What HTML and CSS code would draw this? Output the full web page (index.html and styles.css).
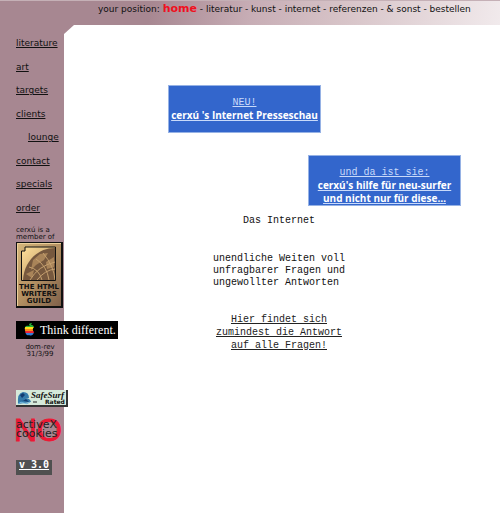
FILE: index.html
```
<!DOCTYPE html>
<html lang="de">
<head>
<meta charset="utf-8">
<title>cerxú - home</title>
<link rel="stylesheet" href="styles.css">
</head>
<body>
<header class="position">your position: <strong>home</strong> - literatur - kunst - internet - referenzen - &amp; sonst - bestellen</header>
<div class="page">
  <aside class="sidebar">
    <nav class="menu">
      <a href="#literature">literature</a>
      <a href="#art">art</a>
      <a href="#targets">targets</a>
      <a href="#clients">clients</a>
      <a class="sub" href="#lounge">lounge</a>
      <a href="#contact">contact</a>
      <a href="#specials">specials</a>
      <a href="#order">order</a>
    </nav>
    <p class="member">cerxú is a<br>member of</p>
    <svg class="guild" width="47" height="66" viewBox="0 0 47 66" role="img" aria-label="The HTML Writers Guild">
      <defs>
        <linearGradient id="brass" x2="1" y2="1"><stop offset="0" stop-color="#d6b77b"/><stop offset=".5" stop-color="#b39062"/><stop offset="1" stop-color="#80614a"/></linearGradient>
        <linearGradient id="sky" x2="1" y2="1"><stop offset="0" stop-color="#ffe09a"/><stop offset="1" stop-color="#b08a5c"/></linearGradient>
      </defs>
      <rect width="47" height="66" fill="#111"/>
      <rect x="1" y="1" width="44" height="63" fill="url(#brass)"/>
      <path d="M1.500 64V1.500H45" fill="none" stroke="#ecd09a"/>
      <path d="M9 5H40V39H5V9H9Z" fill="url(#sky)"/>
      <path d="M7 38C8 20 21 6 39 6V38Z" fill="#76583e"/>
      <path d="M17 18L24 12L32 11L28 18L20 23L15 28ZM30 20L38 15V25L31 27ZM10 32L18 28L16 36Z" fill="#a98459"/>
      <path d="M14 38Q22 24 39 20M21 38Q29 28 39 27M27 11Q38 24 39 38M20 17Q31 24 33 38M13 25Q23 27 26 38" fill="none" stroke="#c5a06f"/>
      <path d="M9 5H39.500V38.500H5.500V9H9Z" fill="none" stroke="#111"/>
      <g class="guild-text"><text x="23" y="47">THE HTML</text><text x="23" y="54">WRITERS</text><text x="23" y="61">GUILD</text></g>
    </svg>
    <svg class="think" width="102" height="18" viewBox="0 0 102 18" role="img" aria-label="Think different.">
      <defs><clipPath id="apple"><path d="M13 5C14 4 17 3 18 6C16 8 17 10 18 11C17 15 15 15 13 14C11 15 9 13 9 9C8 5 11 4 13 5ZM13 4Q13 2 16 2Q15 5 13 4Z"/></clipPath></defs>
      <rect width="102" height="18"/>
      <g clip-path="url(#apple)"><path fill="#27b336" d="M8 2h11v4H8z"/><path fill="#ffe21d" d="M8 6h11v2H8z"/><path fill="#ff8b18" d="M8 8h11v2H8z"/><path fill="#ee2636" d="M8 10h11v2H8z"/><path fill="#347bd5" d="M8 12h11v3H8z"/></g>
      <text class="think-text" x="24" y="13">Think different.</text>
    </svg>
    <p class="revision">dom-rev<br>31/3/99</p>
    <svg class="safe" width="52" height="17" viewBox="0 0 52 17" role="img" aria-label="SafeSurf Rated">
      <rect width="52" height="17" fill="#333"/><path fill="#d5e9da" d="M0 0h50v15H0z"/>
      <path d="M2 14Q1 3 7 2Q13 2 13 8L9 8Q14 8 15 12Z" fill="#347baa"/>
      <path d="M4 5l3-2 2 2-3 3zM3 10l4 1 3-2 3 3" fill="#123c70"/><path d="M2 14q3-3 6-1t6-1" fill="none" stroke="#73b8df"/>
      <text class="safe-name" x="15" y="8">SafeSurf</text><path d="M17 12h4" stroke="#222"/><text class="safe-rated" x="29" y="14">Rated</text>
    </svg>
    <svg class="no" width="48" height="30" viewBox="0 0 48 30" role="img" aria-label="NO activeX cookies">
      <text class="no-big" x="-2" y="26">NO</text>
      <g class="no-small"><text x="0" y="13">activeX</text><text x="0" y="22">cookies</text></g>
    </svg>
    <a class="version" href="#version">v 3.0</a>
  </aside>
  <main class="content">
    <a class="banner news" href="#presse">NEU!<b>cerxú 's Internet Presseschau</b></a>
    <a class="banner help" href="#hilfe">und da ist sie:<b>cerxú's hilfe für neu-surfer<br>und nicht nur für diese…</b></a>
    <div class="story">
      <h1>Das Internet</h1>
      <p>unendliche Weiten voll<br>unfragbarer Fragen und<br>ungewollter Antworten</p>
      <a href="#antwort">Hier findet sich<br>zumindest die Antwort<br>auf alle Fragen!</a>
    </div>
  </main>
</div>
</body>
</html>
```
FILE: styles.css
```
* { box-sizing: border-box; }
body {
  margin: 0;
  min-height: 100vh;
  display: flex;
  flex-direction: column;
  background: #a78791;
  color: #111;
  font: 9px/12px "DejaVu Sans", sans-serif;
}
p, h1 { margin: 0; }
.position {
  height: 25px;
  padding: 2px 0 0 98px;
  white-space: nowrap;
  border-top: 1px solid #c5b0b6;
  background: linear-gradient(100deg, #a78791 30%, #c7adb5 50%, #d8c5c9 70%, #f1eaec 100%);
}
.position strong { color: #f01020; font-size: 11px; }
.page { flex: 1; display: grid; grid-template-columns: 64px 1fr; }
.sidebar { z-index: 1; padding: 12px 0 0 16px; }
.sidebar svg { display: block; overflow: visible; }
.menu {
  display: flex;
  flex-direction: column;
  justify-content: space-between;
  align-items: flex-start;
  height: 177px;
}
.menu a { color: #111; }
.menu .sub { margin-left: 12px; }
.member { margin-top: 13px; font-size: 7px; line-height: 7px; white-space: nowrap; }
.guild { margin-top: 1px; }
.guild-text { font: bold 7px "DejaVu Sans", sans-serif; text-anchor: middle; fill: #111; }
.think { margin-top: 13px; }
.think-text { font: 12px "Liberation Serif", serif; fill: #fff; }
.revision { margin-top: 5px; font-size: 7px; line-height: 7px; text-align: center; }
.safe { margin-top: 32px; }
.safe-name { font: italic bold 9px "Liberation Serif", serif; fill: #111; }
.safe-rated { font: bold 6px "DejaVu Sans", sans-serif; fill: #111; }
.no { margin-top: 8px; }
.no-big { font: 32px "Liberation Sans", sans-serif; fill: #ed1835; stroke: #ed1835; }
.no-small { font: 11px "DejaVu Sans", sans-serif; fill: #222; }
.version {
  display: block;
  width: 36px;
  height: 15px;
  margin-top: 15px;
  padding-left: 3px;
  background: #505050;
  color: #fff;
  font: bold 10px/10px "DejaVu Sans Mono", monospace;
}
.content {
  display: flex;
  flex-direction: column;
  padding: 60px 39px 20px 104px;
  background: #fff;
  clip-path: polygon(10px 0, 100% 0, 100% 100%, 0 100%, 0 9px);
  font: 10px/13px "Liberation Mono", monospace;
}
.banner {
  width: 153px;
  border: 1px solid #96b2e5;
  background: #3366cc;
  color: #c9dafa;
  text-align: center;
  white-space: nowrap;
}
.banner b { display: block; color: #fff; font: bold 10px/13px "Open Sans", sans-serif; }
.news { padding: 10px 0; }
.help { margin-top: 22px; padding: 10px 0 0; align-self: flex-end; }
.story { width: 222px; margin-top: 8px; text-align: center; }
.story h1 { font: inherit; }
.story p { width: max-content; margin: 26px auto 24px; line-height: 12px; text-align: left; }
.story a { color: #222; }
```
